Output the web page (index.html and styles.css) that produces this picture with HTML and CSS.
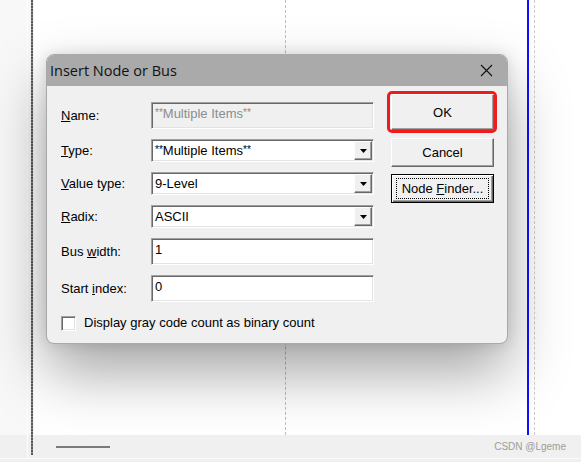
FILE: index.html
```html
<!DOCTYPE html>
<html>
<head>
<meta charset="utf-8">
<title>Insert Node or Bus</title>
<link rel="stylesheet" href="styles.css">
</head>
<body>
<div class="screen">
  <div class="gutter"><div class="gutter-top"></div><div class="gutter-bottom"></div></div>
  <div class="rule"><div class="rule-line"></div></div>
  <div class="work">
    <div class="lanes">
      <div class="lane lane-a"></div>
      <div class="lane lane-b"></div>
      <div class="lane lane-c"></div>
      <div class="lane lane-d"></div>
    </div>
    <div class="status"><span class="thumb"></span><span class="mark">CSDN @Lgeme</span></div>
  </div>
</div>

<div class="dialog">
  <div class="titlebar">
    <span class="title">Insert Node or Bus</span>
    <svg class="close" width="13" height="13" viewBox="0 0 13 13"><path d="M1 1L12 12M12 1L1 12" stroke="#111" stroke-width="1.1" fill="none"/></svg>
  </div>
  <div class="content">
    <div class="form">
      <div class="row"><span class="lbl"><u>N</u>ame:</span><div class="field tall disabled"><span class="val"><span class="ast">**</span>Multiple Items<span class="ast">**</span></span></div></div>
      <div class="row"><span class="lbl"><u>T</u>ype:</span><div class="field select"><span class="val"><span class="ast">**</span>Multiple Items<span class="ast">**</span></span><span class="drop"><svg width="7" height="4" viewBox="0 0 7 4"><path d="M0 0H7L3.5 4Z" fill="#000"/></svg></span></div></div>
      <div class="row"><span class="lbl"><u>V</u>alue type:</span><div class="field select"><span class="val">9-Level</span><span class="drop"><svg width="7" height="4" viewBox="0 0 7 4"><path d="M0 0H7L3.5 4Z" fill="#000"/></svg></span></div></div>
      <div class="row"><span class="lbl"><u>R</u>adix:</span><div class="field select"><span class="val">ASCII</span><span class="drop"><svg width="7" height="4" viewBox="0 0 7 4"><path d="M0 0H7L3.5 4Z" fill="#000"/></svg></span></div></div>
      <div class="row"><span class="lbl">Bus <u>w</u>idth:</span><div class="field tall"><span class="val">1</span></div></div>
      <div class="row"><span class="lbl">Start <u>i</u>ndex:</span><div class="field tall"><span class="val">0</span></div></div>
      <div class="check-row"><span class="checkbox"></span><span class="check-label">Display <u>g</u>ray code count as binary count</span></div>
    </div>
    <div class="buttons">
      <div class="highlight"><button class="btn btn-ok">OK</button></div>
      <button class="btn btn-cancel">Cancel</button>
      <button class="btn btn-default"><span class="focus">Node <u>F</u>inder...</span></button>
    </div>
  </div>
</div>
</body>
</html>
```

FILE: styles.css
```css
html, body {
  margin: 0;
  padding: 0;
}
body {
  width: 581px;
  height: 462px;
  overflow: hidden;
  position: relative;
  background: #f0f0f0;
  font-family: "Liberation Sans", Arial, sans-serif;
  font-size: 13px;
  color: #000;
}

/* background editor */
.screen {
  display: flex;
  height: 458px;
  border-bottom: 1px solid #fbfbfb;
}
.gutter {
  width: 27px;
  display: flex;
  flex-direction: column;
  border-right: 1px solid #fdfdfd;
}
.gutter-top {
  flex: 1;
  background: #f8f8f8;
}
.gutter-bottom {
  height: 23px;
  background: #f0f0f0;
}
.rule {
  width: 6px;
  display: flex;
  justify-content: flex-end;
  background: linear-gradient(#f7f7f7 0 435px, #f0f0f0 435px);
}
.rule-line {
  width: 2px;
  margin-right: 1px;
  margin-bottom: 3px;
  background: repeating-linear-gradient(#5a5a5a 0 2px, #909090 2px 3px);
}
.work {
  flex: 1;
  display: flex;
  flex-direction: column;
}
.lanes {
  flex: 1;
  display: flex;
  background: #fff;
}
.lane-a {
  width: 251px;
  border-right: 1px dashed #bdbdbd;
}
.lane-b {
  width: 241px;
  border-right: 2px solid #1010ff;
}
.lane-c {
  width: 5px;
  border-right: 1px dashed #cccccc;
}
.lane-d {
  flex: 1;
}
.status {
  height: 23px;
  display: flex;
  align-items: center;
  justify-content: space-between;
  padding: 0 15px 0 22px;
  background: #f0f0f0;
}
.thumb {
  width: 54px;
  height: 2px;
  background: #7a7a7a;
}
.mark {
  font-size: 10px;
  color: #9c9c9c;
}

/* dialog */
.dialog {
  position: absolute;
  left: 46px;
  top: 54px;
  width: 462px;
  height: 290px;
  box-sizing: border-box;
  border: 1px solid #a9a9a9;
  border-radius: 8px;
  background: #f0f0f0;
  overflow: hidden;
  box-shadow: 0 28px 60px rgba(0, 0, 0, 0.36), 0 0 14px rgba(0, 0, 0, 0.12);
}
.titlebar {
  height: 31px;
  display: flex;
  align-items: center;
  justify-content: space-between;
  padding: 0 14px 0 3px;
  background: #aaaaaa;
}
.title {
  font-family: "Open Sans", "Noto Sans", sans-serif;
  font-size: 14.5px;
  color: #111;
}
.close {
  display: block;
}
.content {
  display: flex;
  align-items: flex-start;
  padding: 5px 0 0 14px;
}
.form {
  width: 313px;
  margin-top: 11px;
  display: flex;
  flex-direction: column;
  gap: 10px;
}
.row {
  display: flex;
  align-items: center;
}
.lbl {
  width: 90px;
  flex: none;
}
.field {
  flex: 1;
  box-sizing: border-box;
  height: 23px;
  display: flex;
  align-items: center;
  padding: 1px;
  background: #fff;
  border-top: 1px solid #a0a0a0;
  border-left: 1px solid #a0a0a0;
  border-bottom: 1px solid #ffffff;
  border-right: 1px solid #ffffff;
  box-shadow: inset 1px 1px #696969, inset -1px -1px #e3e3e3;
  white-space: nowrap;
}
.field.tall {
  height: 27px;
  align-items: flex-start;
  padding-top: 3px;
}
.field.disabled {
  background: #f0f0f0;
  color: #8c8c8c;
}
.val {
  flex: 1;
  padding-left: 2px;
}
.ast {
  font-size: 10px;
  vertical-align: 2px;
}
.drop {
  width: 18px;
  height: 100%;
  box-sizing: border-box;
  display: flex;
  align-items: center;
  justify-content: center;
  background: #f0f0f0;
  border-top: 1px solid #ffffff;
  border-left: 1px solid #ffffff;
  border-bottom: 1px solid #696969;
  border-right: 1px solid #696969;
  box-shadow: inset -1px -1px #a0a0a0;
}
.drop svg {
  display: block;
}
.check-row {
  display: flex;
  align-items: center;
  margin-top: 4px;
  white-space: nowrap;
}
.check-label {
  margin-top: -2px;
}
.checkbox {
  width: 15px;
  height: 15px;
  box-sizing: border-box;
  margin-right: 8px;
  background: #fff;
  border-top: 1px solid #a0a0a0;
  border-left: 1px solid #a0a0a0;
  border-bottom: 1px solid #fff;
  border-right: 1px solid #fff;
  box-shadow: inset 1px 1px #696969, inset -1px -1px #e3e3e3;
}

/* buttons */
.buttons {
  margin-left: 13px;
  display: flex;
  flex-direction: column;
  align-items: flex-start;
}
.highlight {
  width: 110px;
  box-sizing: border-box;
  border: 3px solid #ee1d1d;
  border-radius: 5px;
  padding-left: 1px;
}
.btn {
  display: block;
  width: 103px;
  height: 29px;
  box-sizing: border-box;
  padding: 0;
  margin: 0;
  text-align: center;
  font-family: "Liberation Sans", Arial, sans-serif;
  font-size: 13px;
  color: #000;
  background: #f0f0f0;
  border-top: 1px solid #ffffff;
  border-left: 1px solid #ffffff;
  border-bottom: 1px solid #696969;
  border-right: 1px solid #696969;
  border-radius: 0;
  box-shadow: inset -1px -1px #a0a0a0;
}
.btn-ok {
  height: 36px;
}
.btn-cancel {
  margin: 5px 0 0 4px;
}
.btn-default {
  margin: 7px 0 0 4px;
  border: 1px solid #000;
  box-shadow: inset 1px 1px #fff, inset -1px -1px #696969, inset -2px -2px #a0a0a0;
}
.focus {
  display: block;
  margin: 0 auto;
  width: 93px;
  height: 21px;
  line-height: 19px;
  box-sizing: border-box;
  border: 1px dotted #000;
  white-space: nowrap;
}
```
